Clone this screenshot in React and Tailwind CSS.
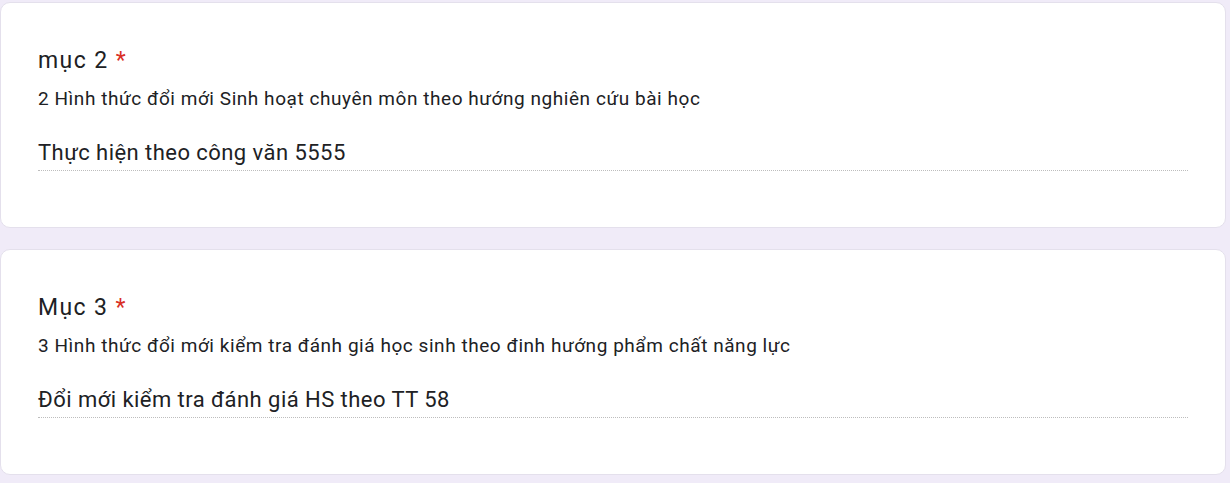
const items = [
  {
    title: 'mục 2',
    desc: '2 Hình thức đổi mới Sinh hoạt chuyên môn theo hướng nghiên cứu bài học',
    answer: 'Thực hiện theo công văn 5555',
  },
  {
    title: 'Mục 3',
    desc: '3 Hình thức đổi mới kiểm tra đánh giá học sinh theo đinh hướng phẩm chất năng lực',
    answer: 'Đổi mới kiểm tra đánh giá HS theo TT 58',
  },
]

const QuestionCard = ({ title, desc, answer }) => (
  <div className="bg-white rounded-[10px] border border-[#e4e0ec] h-[226px] px-[37px] pt-[42px]">
    <div className="text-[23px] leading-[32px] tracking-[1.4px] text-[#202124]">
      {title} <span className="text-[#d93025]">*</span>
    </div>
    <div className="mt-[10px] text-[19px] leading-[24px] tracking-[0.55px] text-[#202124]">{desc}</div>
    <div className="mt-[28px] pb-[3px] border-b border-dotted border-[#bdbdbd]">
      <div className="text-[22px] leading-[28px] tracking-[0.45px] text-[#202124]">{answer}</div>
    </div>
  </div>
)

export default function App() {
  return (
    <div
      className="w-[1230px] h-[483px] bg-[#f0ebf8] pt-[2px] pr-[4px] flex flex-col gap-[21px] overflow-hidden"
      style={{ fontFamily: 'Roboto, "Noto Sans", sans-serif' }}
    >
      {items.map((it, i) => (
        <QuestionCard key={i} {...it} />
      ))}
    </div>
  )
}
